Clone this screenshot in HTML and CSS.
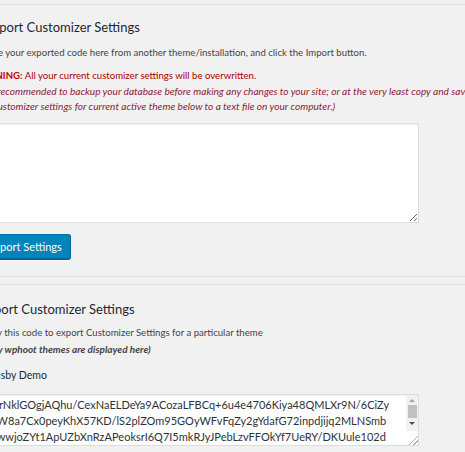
FILE: index.html
```html
<!DOCTYPE html>
<html lang="en">
<head>
    <meta charset="UTF-8">
    <title>Customizer Export/Import</title>
    <link rel="stylesheet" href="styles.css">
</head>
<body>
    <div class="wrap">
        <!-- import -->
        <section class="panel panel-import">
            <h2>Import Customizer Settings</h2>
            <p class="desc">Paste your exported code here from another theme/installation, and click the Import button.</p>
            <p class="warning">
                <span class="warn-line"><strong>WARNING:</strong> All your current customizer settings will be overwritten.</span><br>
                <em>It is recommended to backup your database before making any changes to your site; or at the very least copy and save<br>
                <span class="warn-last">your customizer settings for current active theme below to a text file on your computer.)</span></em>
            </p>
            <textarea class="import-code" rows="6"></textarea>
            <p class="submit">
                <button type="button" class="button-primary">Import Settings</button>
            </p>
        </section>

        <!-- export -->
        <section class="panel panel-export">
            <h2>Export Customizer Settings</h2>
            <p class="desc">Copy this code to export Customizer Settings for a particular theme<br>
                <strong><em>(Only wphoot themes are displayed here)</em></strong></p>
            <h4 class="theme-name">Hoot Busby Demo</h4>
            <div class="code-box">
                <textarea class="export-code" rows="3" readonly>eJyrNklGOgjAQhu/CexNaELDeYa9ACozaLFBCq+6u4e4706Kiya48QMLXr9N/6CiZy
GhW8a7Cx0peyKhX57KD/lS2plZOm95GOyWFvFqZy2gYdafG72inpdjijq2MLNSmb
eGwwjoZYt1ApUZbXnRzAPeoksrI6Q7I5mkRJyJPebLzvFFOkYf7UeRY/DKUule102d
c8sLw0kq3hNfYwQeWnbZTsV9pOyUqAbcvq0L8dDQYdrqHzPqLFjv3fNe0MuX4AqVs</textarea>
                <!-- scrollbar like the windows one -->
                <div class="fake-scroll">
                    <span class="arrow arrow-up"></span>
                    <span class="thumb"></span>
                    <span class="arrow arrow-down"></span>
                </div>
                <div class="grip"></div>
            </div>
        </section>
    </div>
</body>
</html>
```

FILE: styles.css
```css
/* base */
* {
    box-sizing: border-box;
}
body {
    margin: 0;
    padding-top: 4px;
    background-color: #f1f1f1;
    color: #444;
    font-family: 'Lato', 'Noto Sans', sans-serif;
    font-size: 10px;
    line-height: 16px;
    overflow: hidden;
}
.wrap {
    margin-left: -20px;
    width: 700px;
    white-space: nowrap;
}
/* panels */
.panel {
    border-top: 1px solid #dcdcdc;
}
.panel-import {
    border-bottom: 1px solid #dcdcdc;
    padding-bottom: 17px;
}
.panel-export {
    margin-top: 7px;
}
.panel h2 {
    margin: 12px 0 0;
    color: #23282d;
    font-size: 13px;
    font-weight: 400;
    line-height: 20px;
}
.panel-import h2 {
    margin-left: 5px;
}
.panel-export h2 {
    margin-top: 14px;
    margin-left: 0;
}
.desc {
    margin: 8px 0 0;
    font-size: 9.6px;
}
.panel-export .desc {
    margin-top: 6px;
}
.panel-export .desc strong {
    font-size: 10px;
}
.warning {
    margin: 7px 0 0;
    color: #a00;
    line-height: 15.5px;
}
.warn-line {
    font-size: 9.6px;
    margin-left: -7px;
}
.warning strong {
    color: #c00;
}
.warning em {
    color: #8b2236;
    font-size: 10.1px;
}
.warn-last {
    margin-left: -8px;
}
/* textareas */
textarea {
    display: block;
    background: #fff;
    border: 1px solid #ddd;
    box-shadow: inset 0 1px 2px rgba(0, 0, 0, 0.07);
    color: #32373c;
    font-family: inherit;
    outline: none;
}
.import-code {
    width: 439px;
    height: 100px;
    margin-top: 8px;
}
.code-box {
    position: relative;
    width: 439px;
    margin-top: 11px;
}
.export-code {
    width: 100%;
    height: 52px;
    padding: 2px 6px 0 2px;
    font-size: 11px;
    line-height: 16px;
    color: #2c3338;
    overflow: hidden;
    white-space: pre;
    resize: none;
}
/* scrollbar drawn over the textarea */
.fake-scroll {
    position: absolute;
    top: 1px;
    right: 1px;
    width: 12px;
    height: 37px;
    background: #f1f1f1;
    display: flex;
    flex-direction: column;
    align-items: center;
}
.arrow {
    width: 0;
    height: 0;
    border-left: 3px solid transparent;
    border-right: 3px solid transparent;
}
.arrow-up {
    margin-top: 4px;
    border-bottom: 3px solid #a3a3a3;
}
.arrow-down {
    margin-top: 4px;
    border-top: 3px solid #505050;
}
.thumb {
    margin-top: 3px;
    width: 9px;
    height: 13px;
    background: #c1c1c1;
}
.grip {
    position: absolute;
    right: 1px;
    bottom: 1px;
    width: 12px;
    height: 14px;
    background: #fff linear-gradient(135deg, transparent 62%, #b0b0b0 62%, #b0b0b0 68%, transparent 68%, transparent 80%, #b0b0b0 80%, #b0b0b0 86%, transparent 86%);
}
/* button */
.submit {
    margin: 11px 0 0;
    line-height: 0;
}
.button-primary {
    margin-left: -1px;
    height: 25px;
    padding: 0 8px;
    background: #0085ba;
    border: 1px solid #0073aa;
    border-color: #0073aa #006799 #006799;
    border-radius: 3px;
    box-shadow: 0 1px 0 #006799;
    color: #fff;
    font-family: inherit;
    font-size: 11px;
    cursor: pointer;
}
/* theme name */
.theme-name {
    margin: 9px 0 0 -18px;
    font-size: 10.5px;
    font-weight: 400;
    color: #23282d;
}
```
